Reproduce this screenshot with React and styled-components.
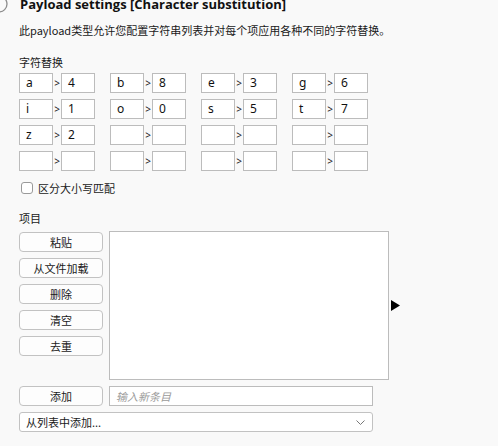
import React from "react";
import styled, { createGlobalStyle } from "styled-components";

const GlobalStyle = createGlobalStyle`
  body {
    margin: 0;
    background: #f9f9f9;
    font-family: "Noto Sans CJK SC", "Noto Sans", sans-serif;
    color: #1a1a1a;
  }
`;

const Page = styled.div`
  padding-left: 19px;
  width: 480px;
  overflow: hidden;
`;

const Header = styled.div`
  display: flex;
  align-items: center;
  margin-top: -4px;
  margin-left: -28px;
  height: 16px;
`;

const HelpIcon = styled.svg`
  width: 18px;
  height: 18px;
  margin-right: 11px;
  flex: none;
`;

const Title = styled.h2`
  margin: 0;
  font-family: "Open Sans", "Noto Sans", sans-serif;
  font-weight: 700;
  font-size: 13px;
  line-height: 16px;
  color: #111;
  white-space: nowrap;
`;

const Desc = styled.p`
  margin: 11px 0 0;
  font-size: 11px;
  line-height: 14px;
  white-space: nowrap;
`;

const Label = styled.div`
  margin-top: ${(p) => p.$top}px;
  font-size: 11px;
  line-height: 14px;
`;

const SubGrid = styled.div`
  display: grid;
  grid-template-columns: repeat(4, 76px);
  column-gap: 15px;
  row-gap: 6px;
  margin-top: 4px;
`;

const Pair = styled.div`
  display: flex;
  align-items: center;
`;

const CharBox = styled.div`
  box-sizing: border-box;
  width: 34px;
  height: 20px;
  border: 1px solid #bcbcbc;
  background: #fff;
  padding-left: 6px;
  font-family: "Noto Sans", sans-serif;
  font-size: 12px;
  line-height: 17px;
  color: #111;
`;

const Arrow = styled.span`
  width: 8px;
  text-align: center;
  font-family: "Noto Sans", sans-serif;
  font-size: 10px;
  line-height: 20px;
  color: #222;
`;

const CheckRow = styled.label`
  display: flex;
  align-items: center;
  gap: 5px;
  margin-top: 10px;
  padding-left: 2px;
  font-size: 11px;
  line-height: 14px;
`;

const Check = styled.span`
  box-sizing: border-box;
  width: 12px;
  height: 12px;
  border: 1px solid #9a9a9a;
  border-radius: 3px;
  background: #fff;
`;

const ItemsArea = styled.div`
  display: flex;
  align-items: flex-start;
  gap: 6px;
  margin-top: 6px;
`;

const ButtonCol = styled.div`
  display: flex;
  flex-direction: column;
  gap: 6px;
  padding-top: 1px;
`;

const Button = styled.button`
  box-sizing: border-box;
  width: 84px;
  height: 20px;
  padding: 0;
  border: 1px solid #c2c2c2;
  border-radius: 4px;
  background: #fdfdfd;
  font-family: inherit;
  font-size: 11px;
  color: #1a1a1a;
`;

const ListWrap = styled.div`
  display: flex;
  align-items: center;
`;

const ListBox = styled.div`
  box-sizing: border-box;
  width: 280px;
  height: 149px;
  border: 1px solid #bcbcbc;
  background: #fff;
`;

const Pointer = styled.svg`
  width: 9px;
  height: 11px;
  margin-left: 2px;
`;

const AddRow = styled.div`
  display: flex;
  gap: 6px;
  margin-top: 6px;
`;

const TextInput = styled.div`
  box-sizing: border-box;
  width: 264px;
  height: 20px;
  border: 1px solid #bcbcbc;
  background: #fff;
  padding-left: 6px;
  font-size: 11px;
  line-height: 18px;
  font-style: italic;
  color: #9a9a9a;
`;

const Select = styled.div`
  box-sizing: border-box;
  display: flex;
  align-items: center;
  justify-content: space-between;
  width: 354px;
  height: 20px;
  margin-top: 6px;
  padding: 0 7px 0 6px;
  border: 1px solid #c2c2c2;
  border-radius: 3px;
  background: #fff;
  font-size: 11px;
`;

const pairs = [
  ["a", "4"], ["b", "8"], ["e", "3"], ["g", "6"],
  ["i", "1"], ["o", "0"], ["s", "5"], ["t", "7"],
  ["z", "2"], ["", ""], ["", ""], ["", ""],
  ["", ""], ["", ""], ["", ""], ["", ""],
];

const buttons = ["粘贴", "从文件加载", "删除", "清空", "去重"];

export default function App() {
  return (
    <Page>
      <GlobalStyle />
      <Header>
        <HelpIcon viewBox="0 0 18 18">
          <circle cx="8" cy="9" r="8" fill="none" stroke="#8c8c8c" strokeWidth="1.3" />
        </HelpIcon>
        <Title>Payload settings [Character substitution]</Title>
      </Header>
      <Desc>此payload类型允许您配置字符串列表并对每个项应用各种不同的字符替换。</Desc>

      <Label $top={18}>字符替换</Label>
      <SubGrid>
        {pairs.map(([from, to], i) => (
          <Pair key={i}>
            <CharBox>{from}</CharBox>
            <Arrow>&gt;</Arrow>
            <CharBox>{to}</CharBox>
          </Pair>
        ))}
      </SubGrid>

      <CheckRow>
        <Check />
        区分大小写匹配
      </CheckRow>

      <Label $top={16}>项目</Label>
      <ItemsArea>
        <ButtonCol>
          {buttons.map((b) => (
            <Button key={b}>{b}</Button>
          ))}
        </ButtonCol>
        <ListWrap>
          <ListBox />
          <Pointer viewBox="0 0 9 11">
            <path d="M0 0 L9 5.5 L0 11 Z" fill="#000" />
          </Pointer>
        </ListWrap>
      </ItemsArea>

      <AddRow>
        <Button>添加</Button>
        <TextInput>输入新条目</TextInput>
      </AddRow>

      <Select>
        <span>从列表中添加...</span>
        <svg width="9" height="5" viewBox="0 0 9 5">
          <path d="M0.5 0.5 L4.5 4.5 L8.5 0.5" fill="none" stroke="#777" strokeWidth="1" />
        </svg>
      </Select>
    </Page>
  );
}
